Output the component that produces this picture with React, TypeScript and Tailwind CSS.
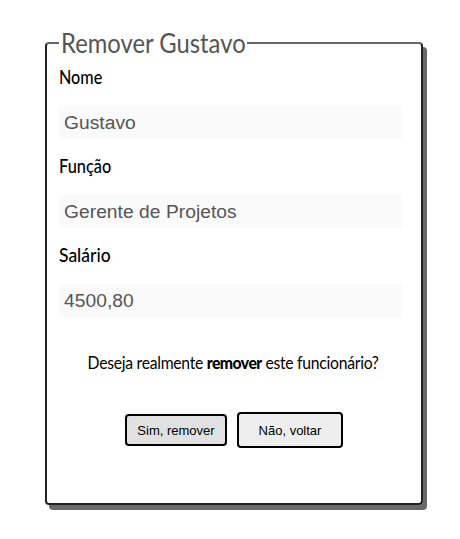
const fields = [
  { label: "Nome", value: "Gustavo", look: "scale-x-[0.85]" },
  { label: "Função", value: "Gerente de Projetos", look: "scale-x-[0.86]" },
  { label: "Salário", value: "4500,80", look: "scale-x-[0.92]" },
];

export default function App() {
  return (
    <main className="h-[539px] w-[460px] bg-white pl-[45px] pt-[27px] font-[Lato,sans-serif] text-black">
      <fieldset className="h-[478px] w-[378px] rounded-[4px] border-2 border-[#222] border-t-[#666] px-3 shadow-[4px_5px_0_0_#696969]">
        <legend className="h-8 w-[188px] whitespace-nowrap px-[2px] text-[27px] leading-8 text-[#555]">
          <span className="inline-block origin-left scale-x-[0.882]">Remover Gustavo</span>
        </legend>
        {fields.map((field) => (
          <label key={field.label} className="block h-[89px] pt-[6px]">
            <span className={`block h-6 origin-left text-[19px] font-medium leading-6 ${field.look}`}>
              {field.label}
            </span>
            <input
              readOnly
              value={field.value}
              className="mt-[17px] block h-[33px] w-[343px] bg-[#fafafa] px-[5px] font-['Liberation_Sans',Arial,sans-serif] text-[19.2px] tracking-[0.05px] text-[#555] outline-none"
            />
          </label>
        ))}
        <p className="mt-[25px] flex h-6 scale-x-[0.925] items-center justify-center whitespace-pre pr-[2px] text-[17px] leading-6 tracking-[-0.3px]">
          <span>Deseja realmente </span>
          <strong className="font-black tracking-[-0.6px]">remover</strong>
          <span> este funcionário?</span>
        </p>
        <div className="mt-[37px] flex items-center justify-center gap-[10px] font-['Liberation_Sans',Arial,sans-serif] text-[13px]">
          <button className="h-8 w-[102px] whitespace-nowrap rounded-[4px] border-2 border-black bg-[#e1e1e1] pt-px">
            Sim, remover
          </button>
          <button className="h-9 w-[106px] whitespace-nowrap rounded-[4px] border-2 border-black bg-[#eee] pt-px">
            Não, voltar
          </button>
        </div>
      </fieldset>
    </main>
  );
}
